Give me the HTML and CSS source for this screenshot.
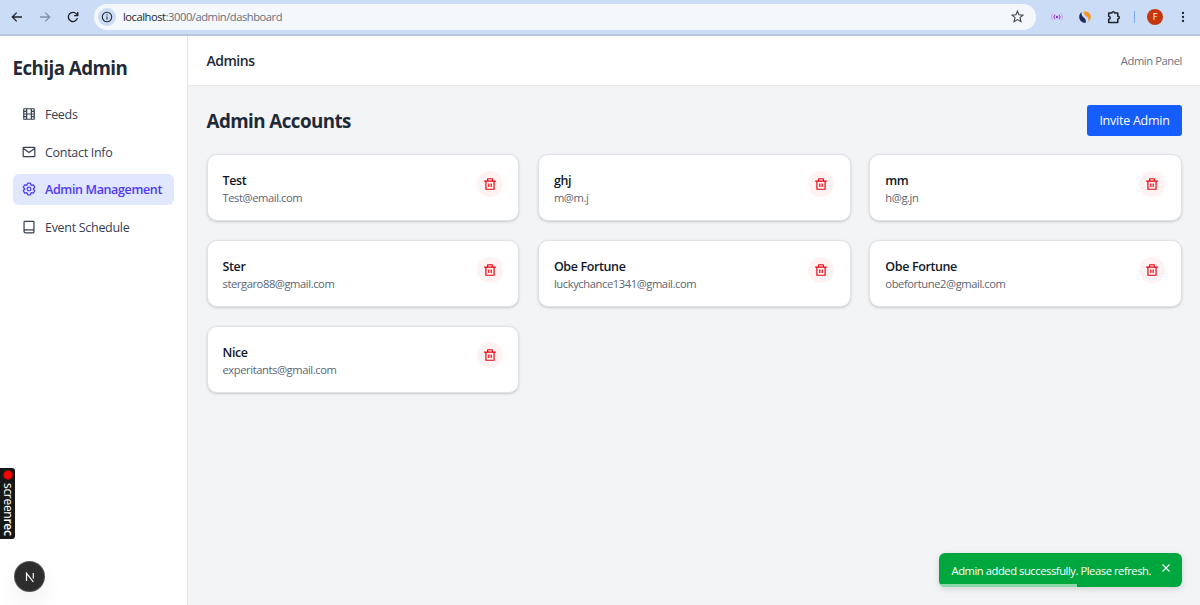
FILE: index.html
```html
<!DOCTYPE html>
<html lang="en">
<head>
    <meta charset="UTF-8">
    <meta name="viewport" content="width=device-width, initial-scale=1.0">
    <title>Echija Admin</title>
    <link rel="stylesheet" href="styles.css">
</head>
<body>
    <!-- icons used more than once -->
    <svg class="sprite">
        <symbol id="trash" viewBox="0 0 24 24">
            <path d="M17 6H22V8H20V21C20 21.55 19.55 22 19 22H5C4.45 22 4 21.55 4 21V8H2V6H7V3C7 2.45 7.45 2 8 2H16C16.55 2 17 2.45 17 3V6ZM18 8H6V20H18V8ZM9 11H11V17H9V11ZM13 11H15V17H13V11ZM9 4V6H15V4H9Z"/>
        </symbol>
    </svg>

    <div class="browser-bar">
        <div class="nav-buttons">
            <svg class="nav-icon" viewBox="0 0 12 12"><path d="M11 6H1.5M5.7 1.6L1.3 6l4.4 4.4"/></svg>
            <svg class="nav-icon disabled" viewBox="0 0 12 12"><path d="M1 6h9.5M6.3 1.6L10.7 6l-4.4 4.4"/></svg>
            <svg class="nav-icon" viewBox="0 0 12 12"><path d="M10.4 7.2A4.6 4.6 0 1 1 9.4 2.9L10.5 4.2M10.8 1v3.7H7.1"/></svg>
        </div>
        <div class="address">
            <span class="site-info">
                <svg viewBox="0 0 12 12"><circle cx="6" cy="6" r="4.7"/><path d="M6 5.4v3M6 3.4v1.1"/></svg>
            </span>
            <span class="url"><b>localhost</b>:3000/admin/dashboard</span>
            <svg class="star" viewBox="0 0 12 12"><path d="M6 1l1.4 3.4 3.7.3-2.8 2.4.9 3.6L6 8.8l-3.2 1.9.9-3.6L.9 4.7l3.7-.3z"/></svg>
        </div>
        <div class="extensions">
            <svg class="ext-signal" viewBox="0 0 12 10"><circle cx="6" cy="5" r="1.2"/><path d="M4 2.8a3 3 0 0 0 0 4.4M8 2.8a3 3 0 0 1 0 4.4"/><path class="faint" d="M2 1.5a5 5 0 0 0 0 7M10 1.5a5 5 0 0 1 0 7"/></svg>
            <svg class="ext-swirl" viewBox="0 0 12 12"><path class="orange" d="M4.8.6c3.4-.8 7 1.4 7 5.2 0 2.2-1 4-2.7 5.1.9-2.2.4-4-1.5-5.4S4.4 2.8 4.8.6z"/><path class="navy" d="M2.7 1C2.1 3.2 2.8 5 4.7 6.4s2.6 3 2 5.3C3.3 12.2.2 9.6.2 6 .2 4 1.1 2.1 2.7 1z"/></svg>
            <svg class="ext-puzzle" viewBox="0 0 14 14"><path d="M1.7 3h3.2c-.2-1.700 2.900-1.700 2.700 0h3.200v3.200c1.900-.2 1.900 2.900 0 2.700v3.600H1.7V9.300c2-.1 2-3 0-3.100z"/></svg>
            <span class="divider"></span>
            <span class="avatar">F</span>
            <svg class="menu" viewBox="0 0 4 12"><circle cx="2" cy="2" r="1.15"/><circle cx="2" cy="6" r="1.15"/><circle cx="2" cy="10" r="1.15"/></svg>
        </div>
    </div>

    <div class="app">
        <aside class="sidebar">
            <h1>Echija Admin</h1>
            <nav>
                <a class="nav-link">
                    <svg viewBox="0 0 24 24"><path d="M4 3h16a1 1 0 0 1 1 1v16a1 1 0 0 1-1 1H4a1 1 0 0 1-1-1V4a1 1 0 0 1 1-1zM8 3v18M16 3v18M8 12h8M3 7.5h5M3 12h5M3 16.5h5M16 7.5h5M16 12h5M16 16.5h5"/></svg>
                    <span>Feeds</span>
                </a>
                <a class="nav-link">
                    <svg viewBox="0 0 24 24"><path d="M3 4h18a1 1 0 0 1 1 1v14a1 1 0 0 1-1 1H3a1 1 0 0 1-1-1V5a1 1 0 0 1 1-1zM3 6.5l9 6.500 9-6.500"/></svg>
                    <span>Contact Info</span>
                </a>
                <a class="nav-link active">
                    <svg viewBox="0 0 24 24"><path d="M9.7 2h4.6l1.4 3.7 3.8-.7 2.3 4-2.5 3 2.5 3-2.3 4-3.8-.7-1.4 3.7H9.7l-1.4-3.7-3.8.7-2.3-4 2.5-3-2.5-3 2.3-4 3.8.7z"/><circle cx="12" cy="12" r="3.2"/></svg>
                    <span>Admin Management</span>
                </a>
                <a class="nav-link">
                    <svg viewBox="0 0 24 24"><path d="M20.5 22H6a2.5 2.5 0 0 1-2.5-2.5V4A1.5 1.5 0 0 1 5 2.5h14.5a1 1 0 0 1 1 1V22M3.5 19.5A2.5 2.5 0 0 1 6 17h14"/></svg>
                    <span>Event Schedule</span>
                </a>
            </nav>
        </aside>

        <div class="main">
            <header class="topbar">
                <h2>Admins</h2>
                <span class="panel-label">Admin Panel</span>
            </header>
            <main class="content">
                <div class="content-head">
                    <h2>Admin Accounts</h2>
                    <button class="invite">Invite Admin</button>
                </div>
                <div class="cards">
                    <div class="card">
                        <div>
                            <p class="name">Test</p>
                            <p class="email">Test@email.com</p>
                        </div>
                        <button class="delete"><svg><use href="#trash"/></svg></button>
                    </div>
                    <div class="card">
                        <div>
                            <p class="name">ghj</p>
                            <p class="email">m@m.j</p>
                        </div>
                        <button class="delete"><svg><use href="#trash"/></svg></button>
                    </div>
                    <div class="card">
                        <div>
                            <p class="name">mm</p>
                            <p class="email">h@g.jn</p>
                        </div>
                        <button class="delete"><svg><use href="#trash"/></svg></button>
                    </div>
                    <div class="card">
                        <div>
                            <p class="name">Ster</p>
                            <p class="email">stergaro88@gmail.com</p>
                        </div>
                        <button class="delete"><svg><use href="#trash"/></svg></button>
                    </div>
                    <div class="card">
                        <div>
                            <p class="name">Obe Fortune</p>
                            <p class="email">luckychance1341@gmail.com</p>
                        </div>
                        <button class="delete"><svg><use href="#trash"/></svg></button>
                    </div>
                    <div class="card">
                        <div>
                            <p class="name">Obe Fortune</p>
                            <p class="email">obefortune2@gmail.com</p>
                        </div>
                        <button class="delete"><svg><use href="#trash"/></svg></button>
                    </div>
                    <div class="card">
                        <div>
                            <p class="name">Nice</p>
                            <p class="email">experitants@gmail.com</p>
                        </div>
                        <button class="delete"><svg><use href="#trash"/></svg></button>
                    </div>
                </div>
            </main>
        </div>
    </div>

    <div class="recorder"><span class="rec-dot"></span><span>screen<b>rec</b></span></div>

    <div class="dev-badge">
        <svg viewBox="0 0 12 12"><path d="M2.5 10V2.3l6.9 8.7M9.3 2v5.5"/></svg>
    </div>

    <div class="toast">
        <span>Admin added successfully. Please refresh.</span>
        <svg class="close" viewBox="0 0 10 10"><path d="M1.5 1.5l7 7M8.5 1.5l-7 7"/></svg>
        <div class="progress"></div>
    </div>
</body>
</html>
```

FILE: styles.css
```css
* { box-sizing: border-box; margin: 0; padding: 0; }
body { height: 605px; display: flex; flex-direction: column; overflow: hidden; font-family: "Open Sans", "Noto Sans", sans-serif; font-size: 12.5px; color: #1e2939; background-color: #f3f4f6; }
svg { display: block; flex: none; }
.sprite { display: none; }
button { font-family: inherit; border: none; cursor: pointer; }

/* browser toolbar */
.browser-bar { height: 36px; flex: none; display: flex; align-items: center; padding: 0 10px 1px 11px; background-color: #cbdcf7; border-bottom: 2px solid #b9c6dc; }
.nav-buttons { display: flex; gap: 16px; margin-right: 15px; }
.nav-icon { width: 12px; height: 12px; fill: none; stroke: #1f2328; stroke-width: 1.3; }
.nav-icon.disabled { stroke: #8391a9; }
.address { width: 942px; height: 26px; display: flex; align-items: center; padding: 0 12px 0 4px; border-radius: 13px; background-color: #f4f8fd; }
.site-info { width: 18px; height: 18px; display: flex; align-items: center; justify-content: center; border-radius: 50%; background-color: #cbdcf7; }
.site-info svg { width: 12px; height: 12px; fill: none; stroke: #26292e; stroke-width: 1.1; }
.url { flex: 1; margin-left: 7px; font-size: 11.2px; letter-spacing: -0.47px; color: #6a6f77; }
.url b { font-weight: 400; color: #24272b; }
.star { width: 13px; height: 13px; fill: none; stroke: #3d4248; stroke-width: 1; }
.extensions { flex: 1; display: flex; align-items: center; margin-left: 15px; }
.ext-signal { width: 12px; height: 10px; fill: none; stroke: #9b2fd0; stroke-width: 1; }
.ext-signal circle { fill: #9b2fd0; stroke: none; }
.ext-signal .faint { stroke: #cf9be8; }
.ext-swirl { width: 12px; height: 12px; margin-left: 16px; }
.orange { fill: #f7941d; }
.navy { fill: #1d2b5c; }
.ext-puzzle { width: 14px; height: 14px; margin-left: 16px; fill: none; stroke: #1f2328; stroke-width: 1.5; stroke-linejoin: round; }
.divider { width: 1px; height: 12px; margin-left: 13px; background-color: #7eaaf0; }
.avatar { width: 16px; height: 16px; margin-left: 12px; border-radius: 50%; background-color: #c5360c; color: #fff; font-size: 9px; line-height: 16px; text-align: center; }
.menu { width: 4px; height: 12px; margin-left: 18px; fill: #1f2328; }

.app { flex: 1; display: flex; min-height: 0; }

/* sidebar */
.sidebar { width: 188px; padding: 19px 13px 0 12.5px; background-color: #fff; border-right: 1px solid #e5e7eb; }
.sidebar h1 { margin-bottom: 18.5px; font-size: 18.75px; line-height: 25px; font-weight: 700; letter-spacing: -0.55px; }
.sidebar nav { display: flex; flex-direction: column; gap: 6.25px; }
.nav-link { height: 31.25px; display: flex; align-items: center; gap: 9px; padding: 0 9.5px; border-radius: 6px; color: #364153; letter-spacing: -0.3px; white-space: nowrap; }
.nav-link span { padding-top: 1px; }
.nav-link svg { width: 14px; height: 14px; fill: none; stroke: currentColor; stroke-width: 2.1; stroke-linejoin: round; }
.nav-link.active { background-color: #e0e7ff; color: #4f39f6; font-weight: 600; letter-spacing: -0.36px; }

/* main area */
.main { flex: 1; display: flex; flex-direction: column; }
.topbar { height: 50px; flex: none; display: flex; align-items: center; justify-content: space-between; padding: 0 18px 0 18.5px; background-color: #fff; border-bottom: 1px solid #e5e7eb; }
.topbar h2 { font-size: 14px; font-weight: 600; letter-spacing: -0.5px; }
.panel-label { font-size: 11.2px; letter-spacing: -0.42px; color: #6a7282; }
.content { padding: 18.75px 18px 0 18.5px; }
.content-head { display: flex; align-items: center; justify-content: space-between; margin-bottom: 18.5px; }
.content-head h2 { font-size: 18.75px; font-weight: 700; line-height: 25px; letter-spacing: -0.55px; }
.invite { height: 31px; width: 95px; padding-top: 1px; border-radius: 3px; background-color: #155dfc; color: #fff; font-size: 12.5px; letter-spacing: -0.25px; }

.cards { display: grid; grid-template-columns: repeat(3, 1fr); gap: 18.75px; }
.card { height: 67.1px; display: flex; justify-content: space-between; align-items: flex-start; padding: 15.5px 15.5px 0 15px; border: 1px solid #dfe2e7; border-radius: 10px; background-color: #fff; box-shadow: 0 1px 3px rgba(0, 0, 0, 0.14), 0 1px 2px -1px rgba(0, 0, 0, 0.14); }
.name { padding-top: 1.2px; font-size: 12.5px; line-height: 18px; font-weight: 600; letter-spacing: -0.38px; color: #101828; }
.email { font-size: 11.2px; line-height: 15.6px; letter-spacing: -0.42px; color: #5b6573; }
.delete { width: 26px; height: 26px; display: flex; align-items: center; justify-content: center; border-radius: 50%; background-color: #fef2f2; }
.delete svg { width: 14px; height: 14px; fill: #e7000b; }

/* overlays */
.recorder { position: absolute; left: 0; top: 468px; width: 15px; height: 71px; display: flex; align-items: center; gap: 4px; padding-top: 3px; writing-mode: vertical-rl; border-radius: 0 3px 3px 0; background-color: #171717; color: #fff; font-size: 12px; line-height: 14px; letter-spacing: -0.3px; white-space: nowrap; }
.recorder b { font-weight: 600; }
.rec-dot { width: 8px; height: 8px; border-radius: 50%; background-color: #f00; box-shadow: 0 0 0 1px #7d1212; }
.dev-badge { position: absolute; left: 15px; top: 562px; width: 29px; height: 29px; display: flex; align-items: center; justify-content: center; border-radius: 50%; background-color: #2d2d2d; box-shadow: 0 0 0 1px #555, 0 12px 24px rgba(0, 0, 0, 0.07); }
.dev-badge svg { width: 12px; height: 12px; fill: none; stroke: #fff; stroke-width: 1.2; }
.toast { position: absolute; right: 18px; bottom: 18px; width: 243px; height: 34px; padding: 1px 11px 0 12.5px; display: flex; align-items: center; justify-content: space-between; border-radius: 6px; overflow: hidden; background-color: #00a63e; color: #fff; font-size: 11.2px; letter-spacing: -0.44px; white-space: nowrap; box-shadow: 0 2px 6px rgba(0, 0, 0, 0.15); }
.close { width: 10px; height: 10px; margin-bottom: 5px; fill: none; stroke: #fff; stroke-width: 1.1; }
.progress { position: absolute; left: 0; bottom: 0; width: 138px; height: 3px; background-color: rgba(255, 255, 255, 0.55); }
```
